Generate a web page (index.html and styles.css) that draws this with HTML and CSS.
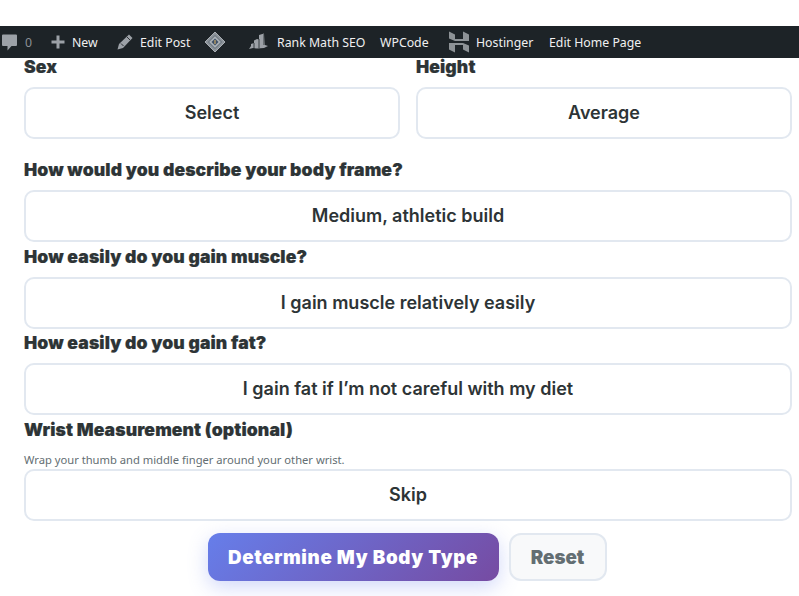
FILE: index.html
```html
<!DOCTYPE html>
<html lang="en">
<head>
<meta charset="utf-8">
<title>Body Type</title>
<link rel="stylesheet" href="styles.css">
</head>
<body>
<div class="topgap"></div>
<nav class="adminbar">
  <span class="item comments">
    <svg class="ic" width="15" height="17" viewBox="0 0 15 17"><path d="M1 .500h13a1 1 0 0 1 1 1V11a1 1 0 0 1-1 1H9.500L5.500 16.500V12H1a1 1 0 0 1-1-1V1.500a1 1 0 0 1 1-1z" fill="#9ca1a7"/></svg>
    <span class="count">0</span>
  </span>
  <span class="item new">
    <svg class="ic" width="16" height="16" viewBox="0 0 16 16"><path d="M6.500 1.500h3v5h5v3h-5v5h-3v-5h-5v-3h5z" fill="#9ca1a7"/></svg>
    New
  </span>
  <span class="item edit">
    <svg class="ic" width="18" height="18" viewBox="0 0 18 18"><path d="M13 1.500l3.500 3.500-9.500 10L1.500 16.500 3 11z" fill="#9ca1a7"/><path d="M11 4l3 3M5 10.500L7.500 13" stroke="#1d2327" stroke-width=".9"/></svg>
    Edit Post
  </span>
  <span class="item diamond">
    <svg width="22" height="22" viewBox="0 0 22 22"><path d="M11 1l10 10-10 10L1 11z" fill="#8b9299" stroke="#a8adb2"/><path d="M11 4.500l6.500 6.500-6.500 6.500L4.500 11z" fill="#aab0b6" stroke="#5a6670"/><path d="M11 7.500l3.500 3.500-3.500 3.500L7.500 11z" fill="#3e5068"/><path d="M11 9v4" stroke="#c9a765" stroke-width="1.200"/></svg>
  </span>
  <span class="item rank">
    <svg class="ic" width="23" height="18" viewBox="0 0 23 18"><path d="M0 16.500l4-.500 2-3V11l3-1V7.500l3-1.500 2 .500V2l5-1.500 1 11.500 3 1-4 2-7 .5-4-.500-4 1z" fill="#9ca1a7"/><path d="M9 10v6M14 6v9M19 1v11" stroke="#1d2327" stroke-width=".8"/></svg>
    Rank Math SEO
  </span>
  <span class="item wpcode">WPCode</span>
  <span class="item host">
    <svg class="ic" width="20" height="22" viewBox="0 0 20 22"><path d="M0 .500l6 3V8h8V.500l6 3V10H6l-6-2.500zM0 12h14l6 2.500V21.500l-6-3V14H6v7.500l-6-3z" fill="#8d9296"/></svg>
    Hostinger
  </span>
  <span class="item page">Edit Home Page</span>
</nav>
<main class="form">
  <div class="row-two">
    <div class="field"><label class="lab">Sex</label><button class="sel">Select</button></div>
    <div class="field"><label class="lab">Height</label><button class="sel">Average</button></div>
  </div>
  <div class="field frame"><label class="lab">How would you describe your body frame?</label><button class="sel">Medium, athletic build</button></div>
  <div class="field next"><label class="lab">How easily do you gain muscle?</label><button class="sel">I gain muscle relatively easily</button></div>
  <div class="field next"><label class="lab">How easily do you gain fat?</label><button class="sel">I gain fat if I’m not careful with my diet</button></div>
  <div class="field next"><label class="lab wrist">Wrist Measurement (optional)</label><p class="hint">Wrap your thumb and middle finger around your other wrist.</p><button class="sel">Skip</button></div>
  <div class="actions">
    <button class="go">Determine My Body Type</button>
    <button class="reset">Reset</button>
  </div>
</main>
</body>
</html>
```
FILE: styles.css
```css
* { box-sizing: border-box; }
html, body { margin: 0; padding: 0; height: 596px; overflow: hidden; background: #fff; }
body { font-family: "Noto Sans", sans-serif; }
.topgap { height: 26px; }
.adminbar {
  height: 32px; background: #1d2327; color: #f0f0f1; padding-left: 2px;
  display: flex; align-items: center; font-size: 12.300px;
  white-space: nowrap;
}
.item { display: flex; align-items: center; }
.ic { flex: none; }
.comments { width: 48px; }
.count { color: #8c9196; margin-left: 8px; }
.new { width: 66px; gap: 6px; }
.edit { width: 88px; gap: 6px; }
.diamond { width: 41px; }
.rank { width: 135px; gap: 9px; }
.wpcode { width: 69px; }
.host { width: 100px; gap: 7px; }
.form { padding: 0 7px 0 24px; }
.row-two { display: grid; grid-template-columns: 376px 376px; gap: 16px; }
.lab { display: block; font-family: Inter, sans-serif; font-size: 17.600px; letter-spacing: .1px; line-height: 18px; height: 18px; font-weight: 900; color: #2d3436; margin-bottom: 11px; -webkit-text-stroke: .2px #2d3436; }
.sel {
  display: block; width: 100%; height: 52px; background: #fff;
  border: 2px solid #e2e8f0; border-radius: 10px;
  font-family: Inter, sans-serif; font-size: 18px; font-weight: 600; color: #2d3436; text-align: center; padding: 0 0 1px;
}
.frame { margin-top: 22px; }
.next { margin-top: 5.500px; }
.next .lab { margin-bottom: 11px; }
.next .lab.wrist { margin-bottom: 0; }
.hint { margin: 14.500px 0 2.500px; font-size: 11.200px; line-height: 13px; color: #636e72; }
.actions { display: flex; justify-content: center; gap: 10px; margin-top: 12px; padding-right: 2px; }
.go {
  width: 291px; height: 48px; border: 0; border-radius: 12px;
  background: linear-gradient(135deg, #667eea, #764ba2); color: #fff;
  font: 900 18.800px Inter, sans-serif; letter-spacing: .65px; box-shadow: 0 6px 20px rgba(102,126,234,.3); padding: 1px 0 0;
}
.reset {
  width: 98px; height: 48px; background: #f8f9fa; border: 2px solid #e2e8f0; border-radius: 12px;
  color: #636e72; font: 900 18.800px Inter, sans-serif; padding: 1px 0 0;
}
```
